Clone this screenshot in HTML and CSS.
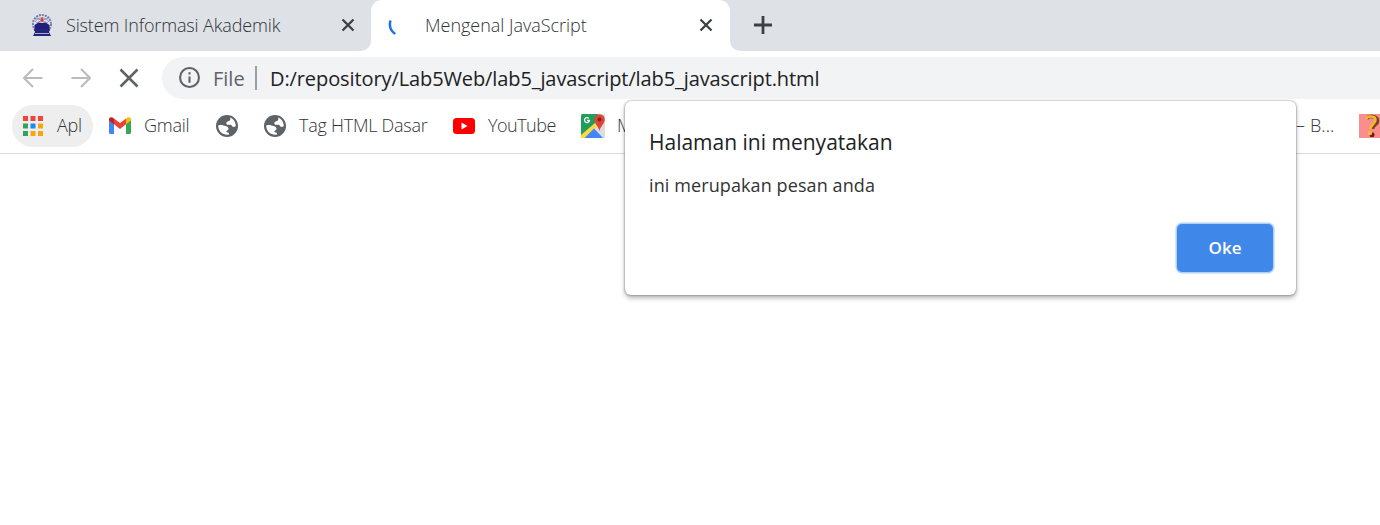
FILE: index.html
```html
<!DOCTYPE html>
<html lang="id">
<head>
<meta charset="utf-8">
<title>Mengenal JavaScript</title>
<link rel="stylesheet" href="styles.css">
</head>
<body>
<div class="browser">
  <header class="tabs">
    <div class="tab">
      <svg class="crest" viewBox="0 0 22 24"><circle cx="11" cy="11" r="9" fill="#e4e6ef" stroke="#777aa9" stroke-width="2" stroke-dasharray="2 1"/><path d="M4 9a8 8 0 0 1 14 0M5 5l12 5M17 5L5 10" fill="none" stroke="#8f91b8"/><path d="M3.500 12l4-2.500 3.500.5 3.500-.5 4 2.500v6h-15z" fill="#211f79"/><path d="M3 16h16l-1 3 2 4H2l2-4z" fill="#25237d"/><path d="M4 20.500h14" stroke="#a9abc9"/><path d="M11 4c2 2 2 5 0 5s-2-3 0-5" fill="#ee3a32"/></svg>
      <span class="tab-title t1">Sistem Informasi Akademik</span>
      <svg class="close" viewBox="0 0 14 14"><path d="M1.500 1.500l11 11m0-11l-11 11"/></svg>
    </div>
    <div class="tab active">
      <svg class="spinner" viewBox="0 0 10 16"><path d="M2.200 1.500C1.300 6 2.700 10.500 6.300 13.200"/></svg>
      <span class="tab-title t2">Mengenal JavaScript</span>
      <svg class="close" viewBox="0 0 14 14"><path d="M1.500 1.500l11 11m0-11l-11 11"/></svg>
    </div>
    <div class="strip-end"><svg class="plus" viewBox="0 0 18 18"><path d="M9 0v18M0 9h18"/></svg></div>
  </header>
  <nav class="toolbar">
    <svg class="nav-icon" viewBox="0 0 20 20"><path d="M19.500 10H1.500M10 1L1 10l9 9"/></svg>
    <svg class="nav-icon" viewBox="0 0 20 20"><path d="M.5 10h18M10 1l9 9-9 9"/></svg>
    <svg class="nav-icon stop" viewBox="0 0 20 20"><path d="M1.500 1.500l17 17m0-17l-17 17"/></svg>
    <div class="address">
      <svg class="info" viewBox="0 0 20 20"><circle cx="10" cy="10" r="9"/><path d="M10 9v6M10 5v2.200"/></svg>
      <span class="scheme">File</span><i class="divider"></i><span class="url">D:/repository/Lab5Web/lab5_javascript/lab5_javascript.html</span>
    </div>
  </nav>
  <nav class="bookmarks">
    <div class="apps">
      <svg class="grid" viewBox="0 0 20 20"><path d="M0 0h5v5H0zM7.500 0h5v5h-5zM15 0h5v5h-5z" fill="#f4433c"/><path d="M0 7.500h5v5H0zM0 15h5v5H0z" fill="#34a35a"/><path d="M7.500 7.500h5v5h-5z" fill="#1e88f0"/><path d="M15 7.500h5v5h-5zM7.500 15h5v5h-5zM15 15h5v5h-5z" fill="#f9a60b"/></svg>
      <span class="apl">Apl</span>
    </div>
    <svg class="gmail" viewBox="0 0 22 17"><path d="M0 2.500l5 3.700V17H1.500Q0 17 0 15.500z" fill="#4285f4"/><path d="M22 2.500l-5 3.700V17h3.500q1.500 0 1.500-1.500z" fill="#34a853"/><path d="M5 1.500l6 4.500 6-4.500v5.800l-6 4.700-6-4.700z" fill="#ea4335"/><path d="M0 2.500C0 0 2.500-.5 5 1.500v5.800L0 3.500z" fill="#c5221f"/><path d="M22 2.500C22 0 19.500-.5 17 1.500v5.800l5-3.800z" fill="#fbbc04"/></svg>
    <span class="b-gmail">Gmail</span>
    <svg class="globe" viewBox="0 0 22 22"><circle cx="11" cy="11" r="11"/><path d="M14 2.500C17.500 3.900 19.800 7 19.800 11c-1.500 1.500-3.600 1-4.200-.7-1.300-.5-4.600.4-5.200-1.500-.4-1.700.8-2.300 2-2.500C14 6 15 4.500 14 2.500zM2.200 10.500C3.700 9.700 6 10 7.500 10.400c2.500.5 5 1 5 3.300 0 1.500-1.800 1.500-2.100 2.600-.2.900.8 1.300 1.700 1.200.8 0 1 1 .9 2C7.500 20.600 2.200 16.800 2.200 10.500z"/></svg>
    <svg class="globe g2" viewBox="0 0 22 22"><circle cx="11" cy="11" r="11"/><path d="M14 2.500C17.500 3.900 19.800 7 19.800 11c-1.500 1.500-3.600 1-4.200-.7-1.300-.5-4.600.4-5.200-1.500-.4-1.700.8-2.300 2-2.500C14 6 15 4.500 14 2.500zM2.200 10.500C3.700 9.700 6 10 7.500 10.400c2.500.5 5 1 5 3.300 0 1.500-1.800 1.500-2.100 2.600-.2.900.8 1.300 1.700 1.200.8 0 1 1 .9 2C7.500 20.600 2.200 16.800 2.200 10.500z"/></svg>
    <span class="b-tag">Tag HTML Dasar</span>
    <svg class="youtube" viewBox="0 0 22 16"><rect width="22" height="16" rx="3.500" fill="red"/><path d="M8.500 4.500v7l6-3.500z" fill="#fff"/></svg>
    <span class="b-yt">YouTube</span>
    <svg class="maps" viewBox="0 0 24 24"><rect width="24" height="24" rx="1.500" fill="#ddd"/><path d="M0 1.500Q0 0 1.500 0H17l-3 10L0 23z" fill="#1f9e5c"/><path d="M0 21L14 9l2 3L3 24H0z" fill="#ffd83d"/><path d="M3.500 24L13 14.500 22 24z" fill="#4285f4"/><path d="M18.500 17c-1-5-5.300-7.500-5.300-11.500a5.300 5.300 0 0 1 10.600 0c0 4-4.300 6.500-5.300 11.500" fill="#db4437"/><circle cx="18.500" cy="5.500" r="1.900" fill="#7b231e"/><path d="M7.800 4.300A2.500 2.500 0 1 0 8.500 6.500H6" fill="none" stroke="#fff" stroke-width="1.300"/></svg>
    <span class="b-maps">M</span>
    <span class="b-last">– B...</span>
    <svg class="question" viewBox="0 0 21 24"><rect width="26" height="24" fill="#fa8e8e"/><path d="M8 5c1-4 10.500-3 10.500 2 0 4-5 3-5 8" fill="none" stroke="#7a3f28" stroke-width="3.600"/><path d="M7 5c1-3.500 9.500-3.500 9.500 1 0 4-5 4-5 9" fill="none" stroke="#efbd28" stroke-width="2.600"/><circle cx="13" cy="20.800" r="2.500" fill="#6b1e22"/><circle cx="11" cy="19" r="2.200" fill="#efbd28"/></svg>
  </nav>
  <main class="page"></main>
  <section class="dialog" role="alertdialog">
    <h1>Halaman ini menyatakan</h1>
    <p>ini merupakan pesan anda</p>
    <button>Oke</button>
  </section>
</div>
</body>
</html>
```
FILE: styles.css
```css
* { box-sizing: border-box; }
body { margin: 0; background: #fff; font-family: "Open Sans", "Noto Sans", sans-serif; font-size: 18px; color: #303438; }
.browser { position: relative; height: 525px; overflow: hidden; }
svg { display: block; flex: none; }
span { white-space: nowrap; flex: none; font-weight: 350; }
.tabs { display: flex; height: 51px; background: linear-gradient(#dee1e6 0 25px, #fff 25px); }
.tab { display: flex; align-items: center; width: 371px; height: 51px; padding: 0 16px 1px 31px; background: #dee1e6; border-radius: 0 0 10px 0; }
.tab.active { width: 359px; padding: 0 17px 1px; background: #fff; border-radius: 11px 11px 0 0; }
.crest { width: 22px; height: 24px; margin-right: 13px; }
.tab-title { flex: 1; line-height: 24px; padding-bottom: 1px; }
.t1 { letter-spacing: -.14px; }
.t2 { letter-spacing: -.02px; }
.close { width: 14px; height: 14px; fill: none; stroke: #3c4043; stroke-width: 2.3; }
.spinner { width: 10px; height: 16px; margin: 5px 27px 0 0; fill: none; stroke: #1a73e8; stroke-width: 2.5; stroke-linecap: round; }
.strip-end { flex: 1; display: flex; align-items: center; padding: 0 0 1px 24px; background: #dee1e6; border-radius: 0 0 0 10px; }
.plus { width: 18px; height: 18px; stroke: #3c4043; stroke-width: 2.8; }
.toolbar { display: flex; align-items: center; height: 54px; padding: 0 0 1px 23px; gap: 28px; }
.nav-icon { width: 20px; height: 20px; fill: none; stroke: #b9bbbd; stroke-width: 2; }
.stop { stroke: #5f6368; stroke-width: 2.5; }
.address { display: flex; align-items: center; flex: 1; height: 42px; margin-left: -5px; padding-left: 17px; background: #f1f3f4; border-radius: 21px 0 0 21px; font-size: 20px; }
.address span { padding-top: 2px; font-weight: 380; }
.info { width: 21px; height: 21px; fill: none; stroke: #5f6368; stroke-width: 2; }
.scheme { width: 42px; margin-left: 13px; color: #5f6368; }
.divider { width: 2px; height: 24px; background: #9aa0a6; }
.url { margin-left: 13px; color: #202124; letter-spacing: -.1px; }
.bookmarks { display: flex; align-items: center; height: 49px; padding: 0 0 7px 12px; border-bottom: 1px solid #d8d9db; }
.bookmarks span { padding-bottom: 2px; letter-spacing: -.25px; }
.apps { display: flex; align-items: center; width: 81px; height: 42px; padding-left: 11px; border-radius: 21px; background: #eee; }
.grid { width: 20px; height: 20px; margin-right: 14px; }
.gmail { width: 22px; height: 17px; margin: 0 13px 0 16px; }
.b-gmail { width: 72px; }
.globe { width: 22px; height: 22px; margin-right: 26px; fill: #5f6368; }
.globe path { fill: #fff; }
.g2 { margin-right: 13px; }
.b-tag { width: 154px; }
.youtube { width: 22px; height: 16px; margin-right: 13px; }
.bookmarks .b-yt { width: 93px; letter-spacing: -.5px; }
.maps { width: 24px; height: 24px; margin-right: 12px; }
.b-maps { width: 679px; }
.bookmarks .b-last { width: 63px; letter-spacing: .1px; }
.question { width: 21px; height: 24px; }
.page { height: 371px; background: #fff; }
.dialog { position: absolute; left: 625px; top: 101px; width: 671px; height: 194px; padding: 26px 23px 23px 24px; display: flex; flex-direction: column; background: #fff; border-radius: 6px; box-shadow: 0 0 2px rgba(0,0,0,.55), 0 3px 5px rgba(0,0,0,.3); }
h1 { margin: 0; font-size: 21px; line-height: 30px; font-weight: 400; color: #202124; }
p { margin: 15px 0 0; font-size: 18px; line-height: 26px; letter-spacing: .1px; color: #333; }
button { width: 96px; height: 48px; margin: auto 0 0 auto; padding: 0 0 1px; border: 0; border-radius: 5px; color: #fff; background: #3f88ea; box-shadow: 0 0 0 1.500px #afd0f8; font: 600 17px "Open Sans", sans-serif; }
```
